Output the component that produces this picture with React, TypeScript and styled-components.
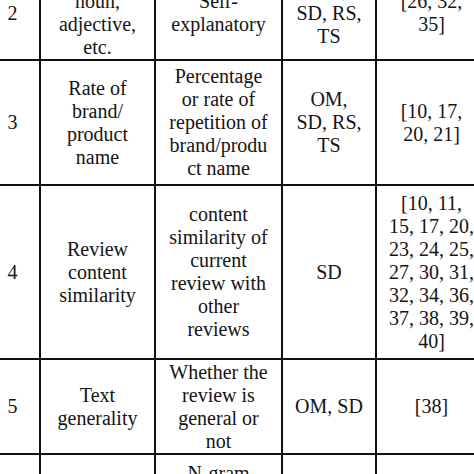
import styled, { createGlobalStyle } from 'styled-components';

const GlobalStyle = createGlobalStyle`
	html,
	body {
		margin: 0;
		padding: 0;
		background: #ffffff;
	}
`;

const Frame = styled.div`
	width: 474px;
	height: 474px;
	overflow: hidden;
	background: #ffffff;
`;

// the table is cropped: row 2 starts above the frame, col 0 and col 4 run past the edges
const Table = styled.div`
	display: grid;
	grid-template-columns: 53px 113px 125px 92px 109px;
	grid-template-rows: 92px 123px 172px 93px 152px;
	gap: 2px;
	padding: 2px;
	width: max-content;
	margin: -35px 0 0 -16px;
	background: #111111;
`;

const Cell = styled.div`
	display: flex;
	flex-direction: column;
	justify-content: center;
	align-items: center;
	background: #ffffff;
	color: #141414;
	font-family: 'Liberation Serif', 'Times New Roman', serif;
	font-size: 20px;
	line-height: 23px;
	text-align: center;
	white-space: nowrap;
`;

const Line = styled.div`
	display: block;
`;

type Row = string[][];

const rows: Row[] = [
	[
		['2'],
		['verb,', 'noun,', 'adjective,', 'etc.'],
		['Self-', 'explanatory'],
		['OM,', 'SD, RS,', 'TS'],
		['[26, 32,', '35]'],
	],
	[
		['3'],
		['Rate of', 'brand/', 'product', 'name'],
		['Percentage', 'or rate of', 'repetition of', 'brand/produ', 'ct name'],
		['OM,', 'SD, RS,', 'TS'],
		['[10, 17,', '20, 21]'],
	],
	[
		['4'],
		['Review', 'content', 'similarity'],
		['content', 'similarity of', 'current', 'review with', 'other', 'reviews'],
		['SD'],
		[
			'[10, 11,',
			'15, 17, 20,',
			'23, 24, 25,',
			'27, 30, 31,',
			'32, 34, 36,',
			'37, 38, 39,',
			'40]',
		],
	],
	[
		['5'],
		['Text', 'generality'],
		['Whether the', 'review is', 'general or', 'not'],
		['OM, SD'],
		['[38]'],
	],
	[
		['6'],
		['N-gram', 'features'],
		['N-gram', 'frequency', 'of words in', 'the review', 'text', 'content'],
		['SD'],
		['[12, 18]'],
	],
];

const App = () => {
	return (
		<>
			<GlobalStyle />
			<Frame>
				<Table>
					{rows.map((row, r) =>
						row.map((cell, c) => (
							<Cell key={`${r}-${c}`}>
								{cell.map((text, i) => (
									<Line key={i}>{text}</Line>
								))}
							</Cell>
						)),
					)}
				</Table>
			</Frame>
		</>
	);
};

export default App;
